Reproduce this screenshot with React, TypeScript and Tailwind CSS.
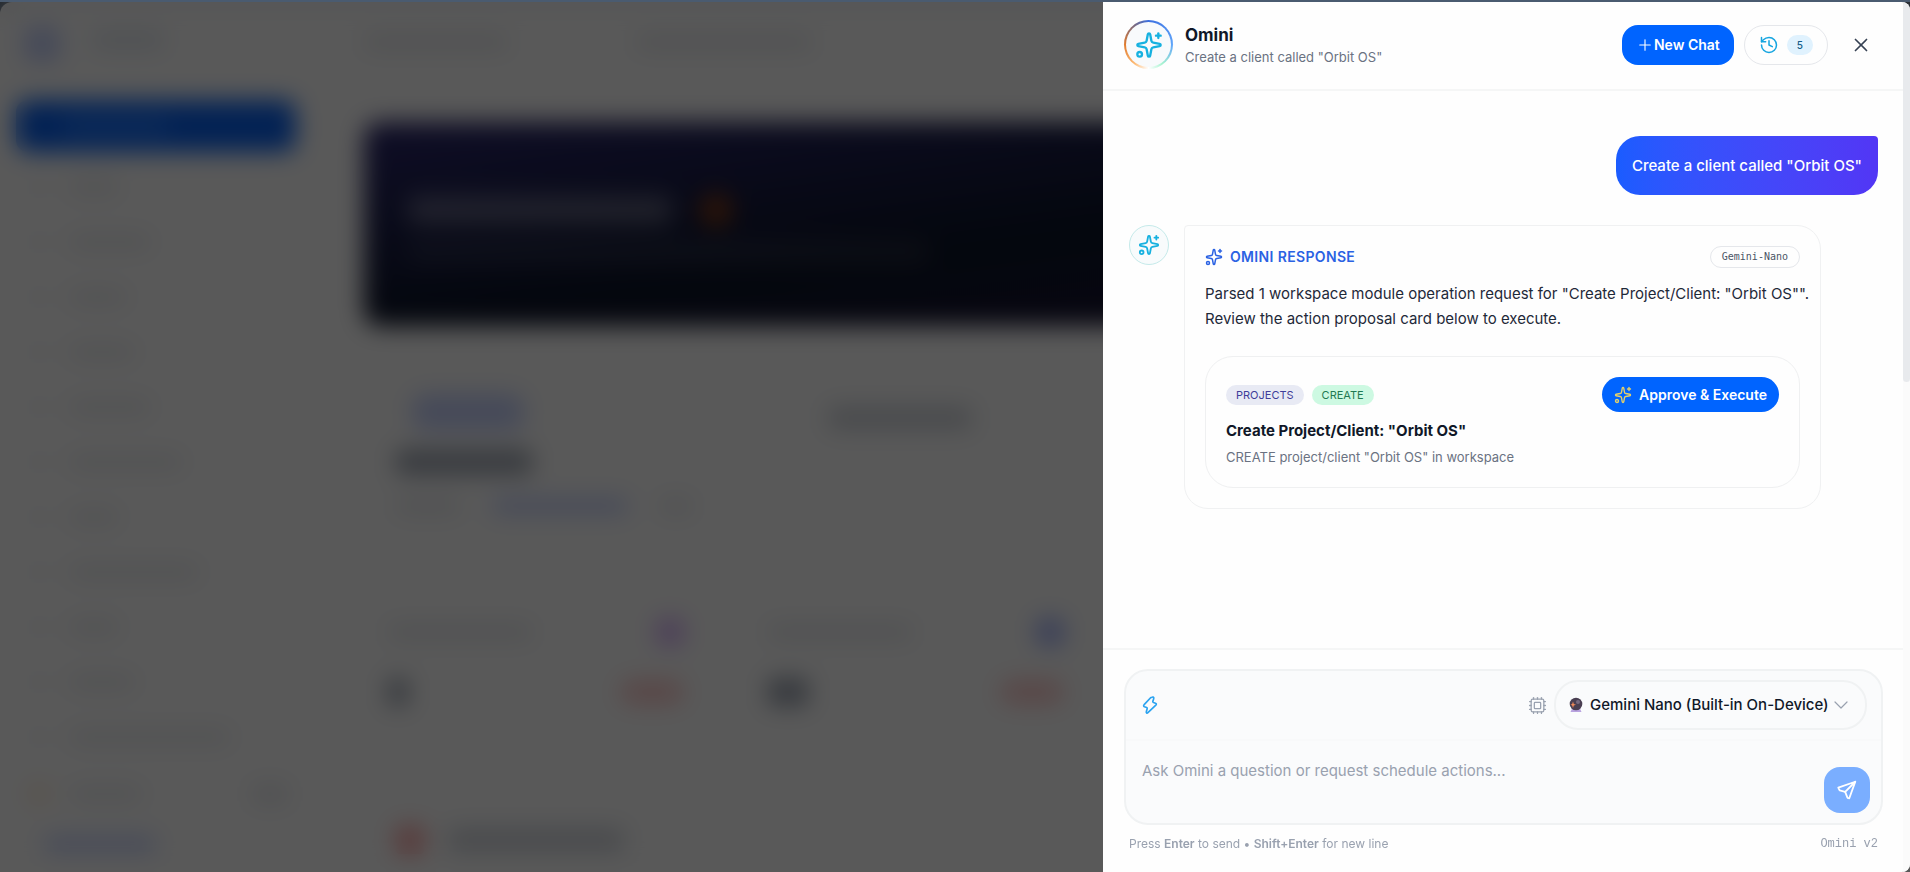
import { useState } from 'react';
import { ChevronDown, Cpu, History, Plus, Sparkles, X } from 'lucide-react';

const NAV_BARS = ['w-12', 'w-20', 'w-14', 'w-16', 'w-20', 'w-28', 'w-12', 'w-32', 'w-12', 'w-16', 'w-40'];

const MODELS = ['Gemini Nano (Built-in On-Device)'];

export default function App() {
  return (
    <div className="relative h-screen overflow-hidden bg-[#4a5b70] pt-0.5 font-['Inter',sans-serif]">
      <Dashboard />
      <div className="absolute inset-0 top-0.5 bg-black/65 backdrop-blur-md" />
      <OminiDrawer />
    </div>
  );
}

function Dashboard() {
  return (
    <div aria-hidden="true" className="flex h-full overflow-hidden rounded-t-xl bg-white">
      <aside className="flex w-80 shrink-0 flex-col px-4 pt-6">
        <div className="flex h-16 items-start gap-8 px-2">
          <div className="size-9 rounded-lg bg-indigo-200" />
          <div className="mt-1 h-5 w-18 rounded bg-slate-200" />
        </div>
        <div className="mt-2.5 flex h-13 w-70 items-center rounded-xl bg-[#0a62f0] pl-12">
          <div className="h-4 w-26 rounded bg-blue-500" />
        </div>
        <div className="mt-7 flex flex-col gap-[41px]">
          {NAV_BARS.map((width, i) => (
            <div key={i} className="flex items-center gap-6 px-4">
              <div className="size-3.5 rounded bg-gray-100" />
              <div className={`h-3.5 rounded bg-gray-200 ${width}`} />
            </div>
          ))}
        </div>
        <div className="mt-10 flex items-center px-4">
          <div className="size-3.5 rounded bg-orange-200" />
          <div className="ml-6 h-3.5 w-18 rounded bg-gray-200" />
          <div className="ml-auto h-5 w-9 rounded bg-gray-200" />
        </div>
        <div className="mt-8 ml-7 h-4 w-28 rounded bg-indigo-200" />
      </aside>
      <div className="min-w-0 flex-1 pl-11">
        <div className="flex h-30 items-start gap-32 pt-8">
          <div className="h-4 w-36 rounded bg-gray-200" />
          <div className="h-4 w-44 rounded bg-gray-200" />
        </div>
        <div className="h-51 rounded-2xl bg-linear-to-br from-[#2c2870] via-[#0c1428] to-[#20103c] px-11 pt-18">
          <div className="flex items-center gap-7">
            <div className="h-7 w-66 rounded bg-white/30" />
            <div className="size-8 rounded-full bg-amber-700/70" />
          </div>
          <div className="mt-4 h-5 w-130 rounded bg-white/10" />
        </div>
        <div className="flex gap-76 px-12 pt-17">
          <div className="h-9 w-28 rounded-xl bg-indigo-200" />
          <div className="mt-3 h-6 w-36 rounded bg-gray-300" />
        </div>
        <div className="mt-5 ml-8 h-6 w-34 rounded bg-gray-400" />
        <div className="mt-6 ml-8 flex gap-8">
          <div className="h-4 w-16 rounded bg-gray-200" />
          <div className="h-4 w-34 rounded bg-indigo-200" />
          <div className="h-4 w-8 rounded bg-gray-200" />
        </div>
        <div className="mt-26 flex gap-9 px-6">
          <StatCard accent="bg-purple-300" value="w-5" />
          <StatCard accent="bg-indigo-300" value="w-10" />
        </div>
        <div className="mt-30 ml-8 flex items-center gap-6">
          <div className="size-7 rounded bg-red-300" />
          <div className="h-6 w-44 rounded bg-gray-300" />
        </div>
      </div>
    </div>
  );
}

function StatCard({ accent, value }: { accent: string; value: string }) {
  return (
    <div className="flex w-86 flex-col gap-8 pr-12">
      <div className="flex items-center justify-between">
        <div className="h-4 w-36 rounded bg-gray-200" />
        <div className={`size-7 rounded-lg ${accent}`} />
      </div>
      <div className="flex items-center justify-between">
        <div className={`h-7 rounded bg-gray-400 ${value}`} />
        <div className="h-6 w-16 rounded-full bg-red-200" />
      </div>
    </div>
  );
}

function OminiDrawer() {
  return (
    <aside className="absolute top-0.5 right-0 bottom-0 flex w-full max-w-[807px] overflow-hidden rounded-r-lg bg-[#fefefe]">
      <div className="flex min-w-0 flex-1 flex-col">
        <DrawerHeader />
        <main className="flex flex-1 flex-col gap-[30px] overflow-hidden pt-[45px] pr-[25px] pl-[26px]">
          <p className="self-end rounded-3xl rounded-tr-sm bg-linear-to-r from-[#1a5cff] to-[#5236f5] px-4 py-[17px] text-[15px] leading-[25px] font-medium text-white">
            Create a client called "Orbit OS"
          </p>
          <ResponseMessage />
        </main>
        <Composer />
      </div>
      <div className="w-[7px] shrink-0 bg-[#fbfbfb]">
        <div className="h-[380px] rounded-b-sm bg-[#e8eaed]" />
      </div>
    </aside>
  );
}

function DrawerHeader() {
  return (
    <header className="flex h-[89px] shrink-0 items-center border-b-2 border-[#f5f6f6] pr-[31px] pb-0.5 pl-[21px]">
      <div className="size-[49px] shrink-0 rounded-full bg-conic-[from_0deg,#3b6fe0,#60a5fa_25%,#a7f3d0_40%,#ffffff_50%,#fdba74_60%,#e07b2e_75%,#7a6a80_90%,#3b6fe0] p-0.5">
        <div className="grid size-full place-items-center rounded-full bg-[#f8fafc]">
          <Sparkles className="size-7 text-[#16b1e0]" />
        </div>
      </div>
      <div className="ml-3 min-w-0 flex-1 pt-0.5">
        <h2 className="text-[17px] leading-6 font-bold text-gray-900">Omini</h2>
        <p className="text-[13px] leading-[21px] text-gray-500">Create a client called "Orbit OS"</p>
      </div>
      <button className="flex h-10 items-center rounded-2xl bg-[#0064ff] px-3.5 text-sm font-semibold text-white">
        <Plus className="size-[18px]" strokeWidth={1.5} />
        New Chat
      </button>
      <button
        aria-label="Chat history, 5 chats"
        className="ml-2.5 flex h-10 items-center gap-2 rounded-[20px] border border-gray-200 px-3.5"
      >
        <History className="size-5 text-[#16a5e0]" strokeWidth={1.8} />
        <span className="rounded-full bg-[#e0f2fe] px-[10px] text-[10px] leading-5 font-medium text-[#155e8a]">5</span>
      </button>
      <button aria-label="Close" className="ml-[22px] text-gray-700">
        <X className="size-[22px]" strokeWidth={1.8} />
      </button>
    </header>
  );
}

function ResponseMessage() {
  return (
    <div className="flex items-start gap-[15px]">
      <div className="grid size-10 shrink-0 place-items-center rounded-full border border-[#c5eaea] bg-[#f8fbfc]">
        <Sparkles className="size-[22px] text-[#16b1e0]" />
      </div>
      <article className="mr-[57px] min-w-0 flex-1 rounded-3xl rounded-tl-sm border border-[#f0f1f2] p-5">
        <div className="flex items-center justify-between">
          <h3 className="flex items-center gap-[7px] text-sm leading-[22px] font-semibold tracking-wide text-[#2b62e3]">
            <Sparkles className="size-[18px]" />
            OMINI RESPONSE
          </h3>
          <span className="rounded-full border border-gray-200 px-[11px] font-['DejaVu_Sans_Mono',monospace] text-[10px] leading-5 text-gray-600">
            Gemini-Nano
          </span>
        </div>
        <p className="-mr-4 mt-[13px] text-[15px] leading-[25px] text-gray-800">
          Parsed 1 workspace module operation request for "Create Project/Client: "Orbit OS"".
          <br />
          Review the action proposal card below to execute.
        </p>
        <section className="mt-[25px] rounded-[28px] border border-[#eff0f1] px-5 pt-5 pb-[19px]">
          <div className="flex items-center gap-2 text-[11px] leading-5">
            <span className="rounded-full bg-[#e8eaf4] px-2.5 text-[#3f3d99]">PROJECTS</span>
            <span className="rounded-full bg-[#cdf9e2] px-2.5 text-[#1f7a52]">CREATE</span>
            <button className="ml-auto flex h-[35px] items-center gap-[7px] rounded-full bg-[#0064ff] px-3 text-sm font-semibold text-white">
              <Sparkles className="size-[18px] text-[#e5d16a]" strokeWidth={1.8} />
              Approve &amp; Execute
            </button>
          </div>
          <h4 className="mt-2 text-[15px] leading-[22px] font-bold text-gray-900">Create Project/Client: "Orbit OS"</h4>
          <p className="mt-1 text-[13px] leading-[22px] text-gray-500">
            CREATE project/client "Orbit OS" in workspace
          </p>
        </section>
      </article>
    </div>
  );
}

function Composer() {
  const [message, setMessage] = useState('');
  const [model, setModel] = useState(MODELS[0]);

  return (
    <footer className="shrink-0 border-t-2 border-[#f5f6f6] pt-[19px] pr-5 pb-[17px] pl-[21px]">
      <form className="rounded-3xl border-2 border-[#f0f2f3] bg-[#fafbfc]" onSubmit={(e) => e.preventDefault()}>
        <div className="flex items-center border-b-2 border-[#f8f9fa] px-[14px] py-[9px]">
          <BoltIcon />
          <Cpu className="mr-[7px] ml-auto size-[19px] text-gray-400" strokeWidth={1.6} />
          <div className="flex h-[50px] items-center rounded-3xl border-2 border-[#f0f2f3] px-3">
            <CrystalBall />
            <select
              aria-label="Model"
              value={model}
              onChange={(e) => setModel(e.target.value)}
              className="ml-1.5 appearance-none bg-transparent text-[15px] leading-6 font-medium text-gray-900 outline-none"
            >
              {MODELS.map((name) => (
                <option key={name}>{name}</option>
              ))}
            </select>
            <ChevronDown className="size-6 text-gray-400" strokeWidth={1.2} />
          </div>
        </div>
        <div className="flex items-end py-2.5 pr-[11px] pl-4">
          <textarea
            aria-label="Message"
            rows={2}
            value={message}
            onChange={(e) => setMessage(e.target.value)}
            placeholder="Ask Omini a question or request schedule actions..."
            className="h-[62px] flex-1 resize-none bg-transparent py-2 text-[15px] leading-6 text-gray-800 outline-none placeholder:text-gray-400"
          />
          <button aria-label="Send" className="grid size-[46px] place-items-center rounded-2xl bg-[#7aaeff] text-white">
            <PlaneIcon />
          </button>
        </div>
      </form>
      <div className="mt-2 flex items-center justify-between px-[5px] text-gray-400">
        <p className="text-xs leading-[22px]">
          Press <b className="font-semibold">Enter</b> to send • <b className="font-semibold">Shift+Enter</b> for new
          line
        </p>
        <span className="font-['Liberation_Mono',monospace] text-xs leading-[22px]">Omini v2</span>
      </div>
    </footer>
  );
}

function BoltIcon() {
  return (
    <svg viewBox="0 0 24 24" className="size-5 text-[#2ba3f0]" fill="none" stroke="currentColor" strokeWidth="2" strokeLinejoin="round">
      <path d="M13 3 5 11.5c-1 1-.8 2 .4 2.500l2.600 1c.7.3.9.8.6 1.500l-1 3.500c-.4 1.500.8 2.200 1.900 1.200l9.500-9c1-1 .7-2-.5-2.400l-2.300-.8c-.8-.3-1-.8-.7-1.600l1-3.200c.5-1.600-1.400-2.400-2.500-1.200z" />
    </svg>
  );
}

function PlaneIcon() {
  return (
    <svg viewBox="0 0 24 24" className="size-[22px]" fill="none" stroke="currentColor" strokeWidth="2" strokeLinejoin="round" strokeLinecap="round">
      <path d="M21 3 2.500 9.500 4 12.500 10 14 12.500 20.500 14.500 21z" />
      <path d="M21 3 10 14" />
    </svg>
  );
}

function CrystalBall() {
  return (
    <svg viewBox="0 0 16 16" className="size-4">
      <path d="M4 11.500h8l1.500 3.500h-11z" fill="#b9a3e0" />
      <circle cx="8" cy="7" r="6.300" fill="#4a3f52" />
      <circle cx="10" cy="5" r="2" fill="#766a80" />
      <path d="M5 4.500 5.800 7 8 7.800 5.800 8.600 5 11 4.200 8.600 2.500 7.800 4.200 7z" fill="#f08a5a" />
    </svg>
  );
}
